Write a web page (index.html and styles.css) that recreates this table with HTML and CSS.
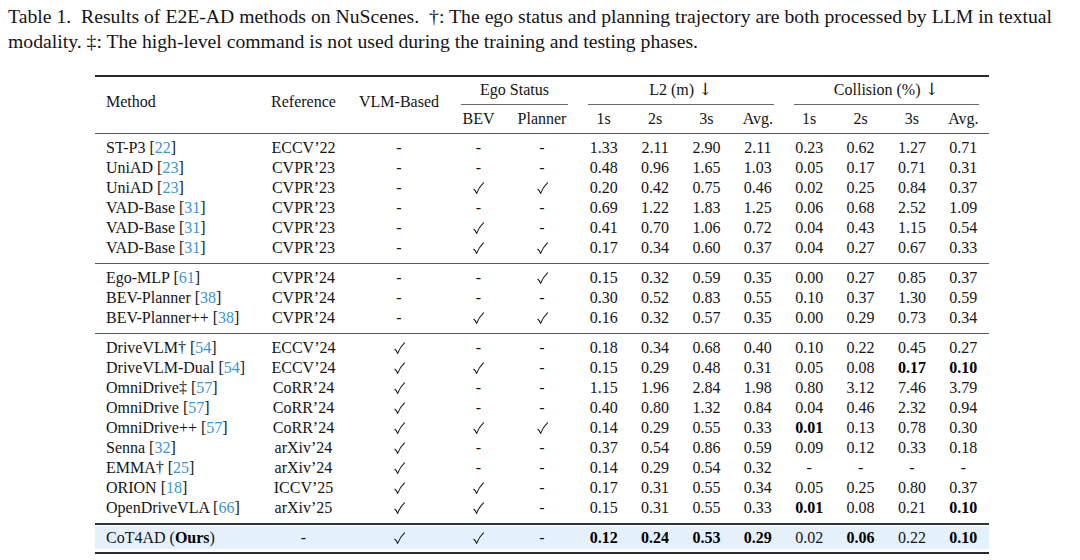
FILE: index.html
```html
<!DOCTYPE html>
<html lang="en">
<head>
<meta charset="utf-8">
<title>Table 1</title>
<link rel="stylesheet" href="styles.css">
</head>
<body>
<div class="page">
  <p class="caption">Table 1.&nbsp; Results of E2E-AD methods on NuScenes.&nbsp; †: The ego status and planning trajectory are both processed by LLM in textual modality. ‡: The high-level command is not used during the training and testing phases.</p>
  <table class="results">
    <colgroup>
      <col class="c-method"><col class="c-ref"><col class="c-vlm"><col class="c-bev"><col class="c-plan">
      <col class="c-num"><col class="c-num"><col class="c-num"><col class="c-num">
      <col class="c-num"><col class="c-num"><col class="c-num"><col class="c-num">
    </colgroup>
    <thead>
      <tr class="h1">
        <th rowspan="2" class="method span">Method</th>
        <th rowspan="2" class="span">Reference</th>
        <th rowspan="2" class="span">VLM-Based</th>
        <th colspan="2"><div class="grp">Ego Status</div></th>
        <th colspan="4"><div class="grp">L2 (m) <span class="arrow">↓</span></div></th>
        <th colspan="4"><div class="grp">Collision (%) <span class="arrow">↓</span></div></th>
      </tr>
      <tr class="h2">
        <th>BEV</th><th>Planner</th>
        <th>1s</th><th>2s</th><th>3s</th><th>Avg.</th>
        <th>1s</th><th>2s</th><th>3s</th><th>Avg.</th>
      </tr>
    </thead>
    <tbody class="group">
      <tr><td class="method">ST-P3 [<span class="cite">22</span>]</td><td>ECCV’22</td><td>-</td><td>-</td><td>-</td><td>1.33</td><td>2.11</td><td>2.90</td><td>2.11</td><td>0.23</td><td>0.62</td><td>1.27</td><td>0.71</td></tr>
      <tr><td class="method">UniAD [<span class="cite">23</span>]</td><td>CVPR’23</td><td>-</td><td>-</td><td>-</td><td>0.48</td><td>0.96</td><td>1.65</td><td>1.03</td><td>0.05</td><td>0.17</td><td>0.71</td><td>0.31</td></tr>
      <tr><td class="method">UniAD [<span class="cite">23</span>]</td><td>CVPR’23</td><td>-</td><td><svg class="ck" viewBox="0 0 11 12"><path d="M0.8 7.3 Q2.6 8.5 3.6 11.4 Q6 5 10.5 0.8"/></svg></td><td><svg class="ck" viewBox="0 0 11 12"><path d="M0.8 7.3 Q2.6 8.5 3.6 11.4 Q6 5 10.5 0.8"/></svg></td><td>0.20</td><td>0.42</td><td>0.75</td><td>0.46</td><td>0.02</td><td>0.25</td><td>0.84</td><td>0.37</td></tr>
      <tr><td class="method">VAD-Base [<span class="cite">31</span>]</td><td>CVPR’23</td><td>-</td><td>-</td><td>-</td><td>0.69</td><td>1.22</td><td>1.83</td><td>1.25</td><td>0.06</td><td>0.68</td><td>2.52</td><td>1.09</td></tr>
      <tr><td class="method">VAD-Base [<span class="cite">31</span>]</td><td>CVPR’23</td><td>-</td><td><svg class="ck" viewBox="0 0 11 12"><path d="M0.8 7.3 Q2.6 8.5 3.6 11.4 Q6 5 10.5 0.8"/></svg></td><td>-</td><td>0.41</td><td>0.70</td><td>1.06</td><td>0.72</td><td>0.04</td><td>0.43</td><td>1.15</td><td>0.54</td></tr>
      <tr><td class="method">VAD-Base [<span class="cite">31</span>]</td><td>CVPR’23</td><td>-</td><td><svg class="ck" viewBox="0 0 11 12"><path d="M0.8 7.3 Q2.6 8.5 3.6 11.4 Q6 5 10.5 0.8"/></svg></td><td><svg class="ck" viewBox="0 0 11 12"><path d="M0.8 7.3 Q2.6 8.5 3.6 11.4 Q6 5 10.5 0.8"/></svg></td><td>0.17</td><td>0.34</td><td>0.60</td><td>0.37</td><td>0.04</td><td>0.27</td><td>0.67</td><td>0.33</td></tr>
    </tbody>
    <tbody class="group">
      <tr><td class="method">Ego-MLP [<span class="cite">61</span>]</td><td>CVPR’24</td><td>-</td><td>-</td><td><svg class="ck" viewBox="0 0 11 12"><path d="M0.8 7.3 Q2.6 8.5 3.6 11.4 Q6 5 10.5 0.8"/></svg></td><td>0.15</td><td>0.32</td><td>0.59</td><td>0.35</td><td>0.00</td><td>0.27</td><td>0.85</td><td>0.37</td></tr>
      <tr><td class="method">BEV-Planner [<span class="cite">38</span>]</td><td>CVPR’24</td><td>-</td><td>-</td><td>-</td><td>0.30</td><td>0.52</td><td>0.83</td><td>0.55</td><td>0.10</td><td>0.37</td><td>1.30</td><td>0.59</td></tr>
      <tr><td class="method">BEV-Planner++ [<span class="cite">38</span>]</td><td>CVPR’24</td><td>-</td><td><svg class="ck" viewBox="0 0 11 12"><path d="M0.8 7.3 Q2.6 8.5 3.6 11.4 Q6 5 10.5 0.8"/></svg></td><td><svg class="ck" viewBox="0 0 11 12"><path d="M0.8 7.3 Q2.6 8.5 3.6 11.4 Q6 5 10.5 0.8"/></svg></td><td>0.16</td><td>0.32</td><td>0.57</td><td>0.35</td><td>0.00</td><td>0.29</td><td>0.73</td><td>0.34</td></tr>
    </tbody>
    <tbody class="group">
      <tr><td class="method">DriveVLM† [<span class="cite">54</span>]</td><td>ECCV’24</td><td><svg class="ck" viewBox="0 0 11 12"><path d="M0.8 7.3 Q2.6 8.5 3.6 11.4 Q6 5 10.5 0.8"/></svg></td><td>-</td><td>-</td><td>0.18</td><td>0.34</td><td>0.68</td><td>0.40</td><td>0.10</td><td>0.22</td><td>0.45</td><td>0.27</td></tr>
      <tr><td class="method">DriveVLM-Dual [<span class="cite">54</span>]</td><td>ECCV’24</td><td><svg class="ck" viewBox="0 0 11 12"><path d="M0.8 7.3 Q2.6 8.5 3.6 11.4 Q6 5 10.5 0.8"/></svg></td><td><svg class="ck" viewBox="0 0 11 12"><path d="M0.8 7.3 Q2.6 8.5 3.6 11.4 Q6 5 10.5 0.8"/></svg></td><td>-</td><td>0.15</td><td>0.29</td><td>0.48</td><td>0.31</td><td>0.05</td><td>0.08</td><td><b>0.17</b></td><td><b>0.10</b></td></tr>
      <tr><td class="method">OmniDrive‡ [<span class="cite">57</span>]</td><td>CoRR’24</td><td><svg class="ck" viewBox="0 0 11 12"><path d="M0.8 7.3 Q2.6 8.5 3.6 11.4 Q6 5 10.5 0.8"/></svg></td><td>-</td><td>-</td><td>1.15</td><td>1.96</td><td>2.84</td><td>1.98</td><td>0.80</td><td>3.12</td><td>7.46</td><td>3.79</td></tr>
      <tr><td class="method">OmniDrive [<span class="cite">57</span>]</td><td>CoRR’24</td><td><svg class="ck" viewBox="0 0 11 12"><path d="M0.8 7.3 Q2.6 8.5 3.6 11.4 Q6 5 10.5 0.8"/></svg></td><td>-</td><td>-</td><td>0.40</td><td>0.80</td><td>1.32</td><td>0.84</td><td>0.04</td><td>0.46</td><td>2.32</td><td>0.94</td></tr>
      <tr><td class="method">OmniDrive++ [<span class="cite">57</span>]</td><td>CoRR’24</td><td><svg class="ck" viewBox="0 0 11 12"><path d="M0.8 7.3 Q2.6 8.5 3.6 11.4 Q6 5 10.5 0.8"/></svg></td><td><svg class="ck" viewBox="0 0 11 12"><path d="M0.8 7.3 Q2.6 8.5 3.6 11.4 Q6 5 10.5 0.8"/></svg></td><td><svg class="ck" viewBox="0 0 11 12"><path d="M0.8 7.3 Q2.6 8.5 3.6 11.4 Q6 5 10.5 0.8"/></svg></td><td>0.14</td><td>0.29</td><td>0.55</td><td>0.33</td><td><b>0.01</b></td><td>0.13</td><td>0.78</td><td>0.30</td></tr>
      <tr><td class="method">Senna [<span class="cite">32</span>]</td><td>arXiv’24</td><td><svg class="ck" viewBox="0 0 11 12"><path d="M0.8 7.3 Q2.6 8.5 3.6 11.4 Q6 5 10.5 0.8"/></svg></td><td>-</td><td>-</td><td>0.37</td><td>0.54</td><td>0.86</td><td>0.59</td><td>0.09</td><td>0.12</td><td>0.33</td><td>0.18</td></tr>
      <tr><td class="method">EMMA† [<span class="cite">25</span>]</td><td>arXiv’24</td><td><svg class="ck" viewBox="0 0 11 12"><path d="M0.8 7.3 Q2.6 8.5 3.6 11.4 Q6 5 10.5 0.8"/></svg></td><td>-</td><td>-</td><td>0.14</td><td>0.29</td><td>0.54</td><td>0.32</td><td>-</td><td>-</td><td>-</td><td>-</td></tr>
      <tr><td class="method">ORION [<span class="cite">18</span>]</td><td>ICCV’25</td><td><svg class="ck" viewBox="0 0 11 12"><path d="M0.8 7.3 Q2.6 8.5 3.6 11.4 Q6 5 10.5 0.8"/></svg></td><td><svg class="ck" viewBox="0 0 11 12"><path d="M0.8 7.3 Q2.6 8.5 3.6 11.4 Q6 5 10.5 0.8"/></svg></td><td>-</td><td>0.17</td><td>0.31</td><td>0.55</td><td>0.34</td><td>0.05</td><td>0.25</td><td>0.80</td><td>0.37</td></tr>
      <tr><td class="method">OpenDriveVLA [<span class="cite">66</span>]</td><td>arXiv’25</td><td><svg class="ck" viewBox="0 0 11 12"><path d="M0.8 7.3 Q2.6 8.5 3.6 11.4 Q6 5 10.5 0.8"/></svg></td><td><svg class="ck" viewBox="0 0 11 12"><path d="M0.8 7.3 Q2.6 8.5 3.6 11.4 Q6 5 10.5 0.8"/></svg></td><td>-</td><td>0.15</td><td>0.31</td><td>0.55</td><td>0.33</td><td><b>0.01</b></td><td>0.08</td><td>0.21</td><td><b>0.10</b></td></tr>
    </tbody>
    <tbody class="ours">
      <tr><td class="method">CoT4AD (<b>Ours</b>)</td><td>-</td><td><svg class="ck" viewBox="0 0 11 12"><path d="M0.8 7.3 Q2.6 8.5 3.6 11.4 Q6 5 10.5 0.8"/></svg></td><td><svg class="ck" viewBox="0 0 11 12"><path d="M0.8 7.3 Q2.6 8.5 3.6 11.4 Q6 5 10.5 0.8"/></svg></td><td>-</td><td><b>0.12</b></td><td><b>0.24</b></td><td><b>0.53</b></td><td><b>0.29</b></td><td>0.02</td><td><b>0.06</b></td><td>0.22</td><td><b>0.10</b></td></tr>
    </tbody>
  </table>
</div>
</body>
</html>
```

FILE: styles.css
```css
html, body {
  margin: 0;
  background: #ffffff;
}

body {
  color: #141414;
  font-family: "Liberation Serif", "Times New Roman", serif;
}

.page {
  padding: 4px 28px 0 8px;
}

.caption {
  margin: 0;
  font-size: 19.7px;
  line-height: 24.5px;
  text-align: justify;
}

.results {
  margin: 22px 0 0 87px;
  width: 894px;
  table-layout: fixed;
  border-collapse: separate;
  border-spacing: 0;
  font-size: 16px;
  line-height: 20px;
}

.c-method { width: 165px; }
.c-ref { width: 87px; }
.c-vlm { width: 104px; }
.c-bev { width: 55px; }
.c-plan { width: 72px; }
.c-num { width: 51.375px; }

.results th,
.results td {
  padding: 0 10px;
  text-align: center;
  font-weight: normal;
  white-space: nowrap;
}

.results .method {
  text-align: left;
  padding-left: 11px;
}

/* header */
.h1 th {
  border-top: 2px solid #2a2a2a;
  padding-top: 3px;
  padding-bottom: 4px;
}

.h1 th.span {
  vertical-align: middle;
  padding-top: 0;
  padding-bottom: 6px;
}

.grp {
  padding-bottom: 4px;
  border-bottom: 1px solid #6a6a6a;
  margin-bottom: -4px;
}

.arrow {
  font-family: "DejaVu Serif", "Liberation Serif", serif;
  font-size: 17px;
  line-height: 1;
  font-weight: 300;
}

.h2 th {
  padding-top: 4px;
  padding-bottom: 4px;
}

/* body groups */
.group tr:first-child td {
  border-top: 1px solid #5a5a5a;
  padding-top: 4px;
}

.group tr:last-child td {
  padding-bottom: 5px;
}

.cite {
  color: #3796d4;
}

.ck {
  width: 11px;
  height: 12px;
  vertical-align: -1px;
  fill: none;
  stroke: #1a1a1a;
  stroke-width: 1.1;
  stroke-linecap: round;
  stroke-linejoin: round;
}

b {
  font-weight: bold;
  color: #000;
}

/* our row */
.ours td {
  border-top: 2px solid #333333;
  border-bottom: 2px solid #2a2a2a;
  padding-top: 2px;
  padding-bottom: 4px;
  line-height: 21px;
  background: linear-gradient(#e4f1fc, #e4f1fc) 0 1px / 100% 23px no-repeat;
}
```
